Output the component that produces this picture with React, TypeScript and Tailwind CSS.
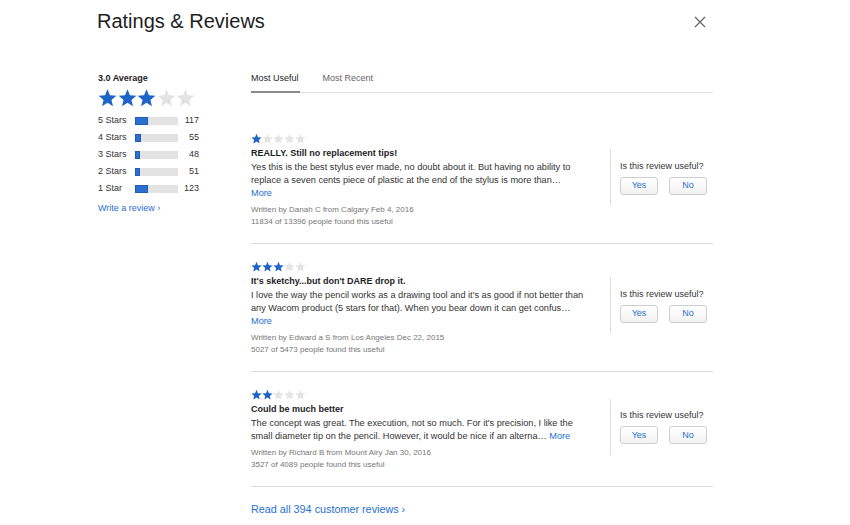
import React from "react";

const BLUE = "#1f6fd1";

function Star({ filled, size }: { filled: boolean; size: number }) {
  return (
    <svg width={size} height={size} viewBox="0 0 24 24" className="block">
      <path
        d="M12 1.5l3.1 7.6 8.1.6-6.2 5.3 1.9 8-6.9-4.3-6.9 4.3 1.9-8L.8 9.7l8.1-.6z"
        fill={filled ? "#1e63c7" : "#e3e3e3"}
      />
    </svg>
  );
}

function Stars({ n, size, gap }: { n: number; size: number; gap: string }) {
  return (
    <div className={`flex ${gap}`}>
      {[0, 1, 2, 3, 4].map((i) => (
        <Star key={i} filled={i < n} size={size} />
      ))}
    </div>
  );
}

const dist = [
  { label: "5 Stars", pct: 30, count: 117 },
  { label: "4 Stars", pct: 14, count: 55 },
  { label: "3 Stars", pct: 12, count: 48 },
  { label: "2 Stars", pct: 12, count: 51 },
  { label: "1 Star", pct: 31, count: 123 },
];

type Review = {
  stars: number;
  title: string;
  lines: string[];
  moreInline: boolean;
  by: string;
  found: string;
};

const reviews: Review[] = [
  {
    stars: 1,
    title: "REALLY. Still no replacement tips!",
    lines: [
      "Yes this is the best stylus ever made, no doubt about it. But having no ability to",
      "replace a seven cents piece of plastic at the end of the stylus is more than…",
    ],
    moreInline: false,
    by: "Written by Danah C from Calgary Feb 4, 2016",
    found: "11834 of 13396 people found this useful",
  },
  {
    stars: 3,
    title: "It's sketchy...but don't DARE drop it.",
    lines: [
      "I love the way the pencil works as a drawing tool and it's as good if not better than",
      "any Wacom product (5 stars for that). When you bear down it can get confus…",
    ],
    moreInline: false,
    by: "Written by Edward a S from Los Angeles Dec 22, 2015",
    found: "5027 of 5473 people found this useful",
  },
  {
    stars: 2,
    title: "Could be much better",
    lines: [
      "The concept was great. The execution, not so much. For it's precision, I like the",
      "small diameter tip on the pencil. However, it would be nice if an alterna…",
    ],
    moreInline: true,
    by: "Written by Richard B from Mount Airy Jan 30, 2016",
    found: "3527 of 4089 people found this useful",
  },
];

function ReviewRow({ r }: { r: Review }) {
  return (
    <div className="flex items-center border-b border-[#dcdcdc] pt-[17px] pb-[15px]">
      <div className="w-[359px] shrink-0">
        <Stars n={r.stars} size={11} gap="gap-0" />
        <div className="mt-[3px] text-[9px] font-bold leading-[13px] text-[#1d1d1f]">{r.title}</div>
        <div className="mt-[1px] text-[9.2px] leading-[13px] text-[#333]">
          <div>{r.lines[0]}</div>
          <div>
            {r.lines[1]}
            {r.moreInline && <span className="text-[#1f6fd1]"> More</span>}
          </div>
          {!r.moreInline && <div className="text-[#1f6fd1]">More</div>}
        </div>
        <div className="mt-[4px] text-[8px] leading-[12px] text-[#777]">
          <div>{r.by}</div>
          <div>{r.found}</div>
        </div>
      </div>
      <div className="mb-[7px] flex h-[56px] flex-col justify-center border-l border-[#dcdcdc] pl-[9px]">
        <div className="text-[9px] leading-[12px] text-[#333]">Is this review useful?</div>
        <div className="mt-[5px] flex gap-[11px]">
          {["Yes", "No"].map((t) => (
            <button
              key={t}
              className="h-[18px] w-[38px] rounded-[3px] border border-[#cfcfcf] bg-gradient-to-b from-white to-[#f2f2f2] text-[9px] leading-none"
              style={{ color: BLUE }}
            >
              {t}
            </button>
          ))}
        </div>
      </div>
    </div>
  );
}

export default function App() {
  return (
    <div
      className="relative h-[525px] w-[850px] bg-white text-[#333]"
      style={{ fontFamily: '"Liberation Sans", Arial, sans-serif' }}
    >
      <div className="flex items-start justify-between pl-[97px] pr-[144px] pt-[9px]">
        <h1 className="text-[20px] leading-[24px] text-[#1d1d1f]">Ratings &amp; Reviews</h1>
        <svg width="12" height="12" viewBox="0 0 12 12" className="mt-[7px]">
          <path d="M1 1L11 11M11 1L1 11" stroke="#666" strokeWidth="1.3" />
        </svg>
      </div>

      <div className="mt-[39px] flex pl-[98px]">
        <div className="w-[153px] shrink-0">
          <div className="text-[9px] font-bold leading-[12px] text-[#1d1d1f]">3.0 Average</div>
          <div className="mt-[4px]">
            <Stars n={3} size={19} gap="gap-[0.5px]" />
          </div>
          <div className="mt-[5px] flex flex-col">
            {dist.map((d) => (
              <div key={d.label} className="flex h-[17px] items-center text-[9px] text-[#333]">
                <span className="w-[37px]">{d.label}</span>
                <div className="h-[8px] w-[43px] bg-[#e3e3e3]">
                  <div
                    className="h-full border border-[#1d5fb8] bg-[#2d6fcf]"
                    style={{ width: `${d.pct}%` }}
                  />
                </div>
                <span className="w-[21px] text-right">{d.count}</span>
              </div>
            ))}
          </div>
          <div className="mt-[5px] text-[9px] leading-[12px]" style={{ color: BLUE }}>
            Write a review ›
          </div>
        </div>

        <div className="w-[462px]">
          <div className="flex border-b border-[#e0e0e0] text-[9px] leading-[12px]">
            <div className="-mb-px border-b-2 border-[#8a8a8a] pb-[7px] pr-[1px] text-[#1d1d1f]">
              Most Useful
            </div>
            <div className="ml-[23px] pb-[7px] text-[#666]">Most Recent</div>
          </div>
          <div className="mt-[23px]">
            {reviews.map((r, i) => (
              <ReviewRow key={i} r={r} />
            ))}
          </div>
          <div className="mt-[15px] text-[10.8px] leading-[14px]" style={{ color: BLUE }}>
            Read all 394 customer reviews ›
          </div>
        </div>
      </div>
    </div>
  );
}
